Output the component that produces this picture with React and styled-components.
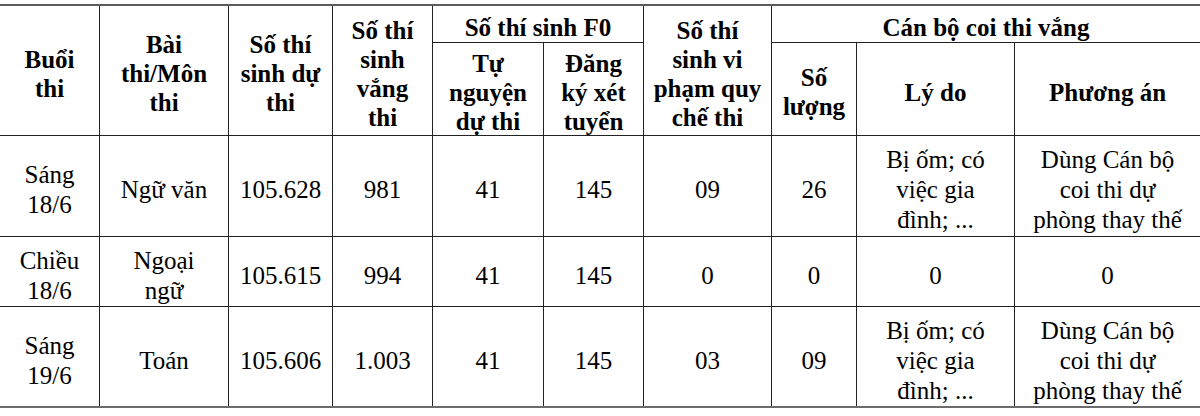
import React from 'react';
import styled, { createGlobalStyle } from 'styled-components';

const GlobalStyle = createGlobalStyle`
  html, body {
    margin: 0;
    padding: 0;
    background: #fff;
  }
  body {
    font-family: "Liberation Serif", "Times New Roman", serif;
    color: #000;
  }
`;

const Page = styled.div`
  width: 1200px;
  height: 416px;
  padding-top: 4px;
  box-sizing: border-box;
  overflow: hidden;
  background: #fff;
`;

// 10 columns, 5 rows (2 header rows + 3 data rows)
const Grid = styled.div`
  display: grid;
  grid-template-columns: 100px 129px 104px 100px 111px 100px 128px 85px 158px 185px;
  grid-template-rows: 37px 93px 101px 70px 99px;
  border-top: 2px solid #5c5c5c;
  border-bottom: 2px solid #6c6c6c;
  font-family: "Liberation Serif", "Times New Roman", serif;
  color: #000;
`;

const Cell = styled.div`
  box-sizing: border-box;
  display: flex;
  align-items: center;
  justify-content: center;
  text-align: center;
  padding: ${(p) => (p.$head ? '6px 4px 0' : '8px 4px 0')};
  grid-column: span ${(p) => p.$cols || 1};
  grid-row: span ${(p) => p.$rows || 1};
  border-right: ${(p) => (p.$lastCol ? 'none' : '1px solid #222')};
  border-bottom: ${(p) => (p.$lastRow ? 'none' : '1px solid #222')};
  font-size: 25px;
  line-height: ${(p) => (p.$head ? '29px' : '30px')};
  font-weight: ${(p) => (p.$head ? 700 : 400)};
`;

const Text = styled.span`
  display: block;
`;

const rows = [
  [['Sáng', '18/6'], 'Ngữ văn', '105.628', '981', '41', '145', '09', '26', ['Bị ốm; có', 'việc gia', 'đình; ...'], ['Dùng Cán bộ', 'coi thi dự', 'phòng thay thế']],
  [['Chiều', '18/6'], ['Ngoại', 'ngữ'], '105.615', '994', '41', '145', '0', '0', '0', '0'],
  [['Sáng', '19/6'], 'Toán', '105.606', '1.003', '41', '145', '03', '09', ['Bị ốm; có', 'việc gia', 'đình; ...'], ['Dùng Cán bộ', 'coi thi dự', 'phòng thay thế']],
];

const Lines = ({ value }) => {
  const list = Array.isArray(value) ? value : [value];
  return (
    <Text>
      {list.map((line, i) => (
        <React.Fragment key={i}>
          {i > 0 && <br />}
          {line}
        </React.Fragment>
      ))}
    </Text>
  );
};

export default function App() {
  return (
    <Page>
      <GlobalStyle />
      <Grid>
        <Cell $head $rows={2}><Lines value={['Buổi', 'thi']} /></Cell>
        <Cell $head $rows={2}><Lines value={['Bài', 'thi/Môn', 'thi']} /></Cell>
        <Cell $head $rows={2}><Lines value={['Số thí', 'sinh dự', 'thi']} /></Cell>
        <Cell $head $rows={2}><Lines value={['Số thí', 'sinh', 'vắng', 'thi']} /></Cell>
        <Cell $head $cols={2}><Lines value="Số thí sinh F0" /></Cell>
        <Cell $head $rows={2}><Lines value={['Số thí', 'sinh vi', 'phạm quy', 'chế thi']} /></Cell>
        <Cell $head $cols={3} $lastCol><Lines value="Cán bộ coi thi vắng" /></Cell>

        <Cell $head><Lines value={['Tự', 'nguyện', 'dự thi']} /></Cell>
        <Cell $head><Lines value={['Đăng', 'ký xét', 'tuyển']} /></Cell>
        <Cell $head><Lines value={['Số', 'lượng']} /></Cell>
        <Cell $head><Lines value="Lý do" /></Cell>
        <Cell $head $lastCol><Lines value="Phương án" /></Cell>

        {rows.map((r, ri) =>
          r.map((c, ci) => (
            <Cell
              key={`${ri}-${ci}`}
              $lastCol={ci === r.length - 1}
              $lastRow={ri === rows.length - 1}
            >
              <Lines value={c} />
            </Cell>
          ))
        )}
      </Grid>
    </Page>
  );
}
